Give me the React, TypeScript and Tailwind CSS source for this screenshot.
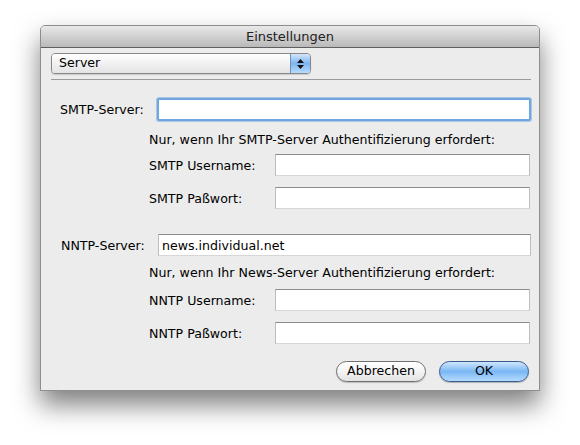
import React from 'react';

const font = { fontFamily: '"DejaVu Sans", "Liberation Sans", sans-serif' };

const Field: React.FC<{ value?: string; focused?: boolean; className?: string }> = ({ value, focused, className }) => (
  <div
    className={
      'flex h-[22px] items-center bg-white px-[3px] text-[12.6px] leading-[15px] text-black ' +
      (focused
        ? 'rounded-[2px] border-2 border-[#6fa6de] shadow-[0_0_0_1px_#a9c8ea] '
        : 'border border-[#bdbdbd] border-t-[#8c8c8c] border-b-[#d6d6d6] ') +
      (className ?? '')
    }
  >
    {value}
  </div>
);

const Row: React.FC<{ label: string; labelW: string; pad: string; mt: string; value?: string; focused?: boolean; fieldW: string }> = ({
  label,
  labelW,
  pad,
  mt,
  value,
  focused,
  fieldW,
}) => (
  <div className={'flex items-center ' + pad + ' ' + mt}>
    <span className={'text-[12.6px] leading-[15px] text-black ' + labelW}>{label}</span>
    <Field value={value} focused={focused} className={fieldW} />
  </div>
);

export default function App() {
  return (
    <div className="h-[445px] w-[580px] bg-white pl-[40px] pt-[25px]" style={font}>
      <div className="flex h-[366px] w-[500px] flex-col overflow-hidden rounded-t-[5px] border border-[#8e8e8e] bg-[#ececec] shadow-[0_14px_26px_rgba(0,0,0,0.5)]">
        <div className="flex h-[22px] shrink-0 items-center justify-center border-b border-[#5f5f5f] bg-gradient-to-b from-[#e9e9e9] to-[#b9b9b9] text-[13px] text-[#222]">
          Einstellungen
        </div>

        <div className="ml-[10px] mt-[5px] flex h-[21px] w-[260px] overflow-hidden rounded-[4px] border border-[#888] shadow-[0_1px_1px_rgba(0,0,0,0.15)]">
          <div className="flex flex-1 items-center bg-gradient-to-b from-white via-[#f1f1f1] to-[#e4e4e4] pl-[7px] text-[12.6px] text-black">
            Server
          </div>
          <div className="flex w-[20px] flex-col items-center justify-center gap-[2px] border-l border-[#6f8fb8] bg-gradient-to-b from-[#d3e6fb] via-[#7db5f0] to-[#b8dcfd]">
            <svg width="7" height="4" viewBox="0 0 7 4"><path d="M3.5 0 L7 4 L0 4 Z" fill="#111" /></svg>
            <svg width="7" height="4" viewBox="0 0 7 4"><path d="M0 0 L7 0 L3.5 4 Z" fill="#111" /></svg>
          </div>
        </div>

        <div className="ml-[10px] mt-[5px] h-px w-[480px] bg-[#9a9a9a]" />

        <Row label="SMTP-Server:" labelW="w-[97px]" pad="pl-[19px]" mt="mt-[18px]" focused fieldW="w-[374px] h-[23px]" />
        <div className="mt-[11px] pl-[108px] text-[12.6px] leading-[15px] text-black">Nur, wenn Ihr SMTP-Server Authentifizierung erfordert:</div>
        <Row label="SMTP Username:" labelW="w-[126px]" pad="pl-[108px]" mt="mt-[7px]" fieldW="w-[255px]" />
        <Row label="SMTP Paßwort:" labelW="w-[126px]" pad="pl-[108px]" mt="mt-[11px]" fieldW="w-[255px]" />

        <Row label="NNTP-Server:" labelW="w-[97px]" pad="pl-[20px]" mt="mt-[25px]" value="news.individual.net" fieldW="w-[373px]" />
        <div className="mt-[9px] pl-[108px] text-[12.6px] leading-[15px] text-black">Nur, wenn Ihr News-Server Authentifizierung erfordert:</div>
        <Row label="NNTP Username:" labelW="w-[126px]" pad="pl-[108px]" mt="mt-[9px]" fieldW="w-[255px]" />
        <Row label="NNTP Paßwort:" labelW="w-[126px]" pad="pl-[108px]" mt="mt-[11px]" fieldW="w-[255px]" />

        <div className="mr-[10px] mt-[17px] flex justify-end gap-[13px]">
          <button className="flex h-[21px] w-[90px] items-center justify-center rounded-full border border-[#707070] bg-gradient-to-b from-white via-[#f4f4f4] to-[#e2e2e2] text-[12.6px] text-black shadow-[0_1px_1px_rgba(0,0,0,0.2)]">
            Abbrechen
          </button>
          <button className="flex h-[21px] w-[90px] items-center justify-center rounded-full border border-[#3b5a8c] bg-gradient-to-b from-[#cfe6fd] via-[#7ab7f4] to-[#b5dcff] text-[12.6px] text-black shadow-[0_1px_1px_rgba(0,0,0,0.25)]">
            OK
          </button>
        </div>
      </div>
    </div>
  );
}
